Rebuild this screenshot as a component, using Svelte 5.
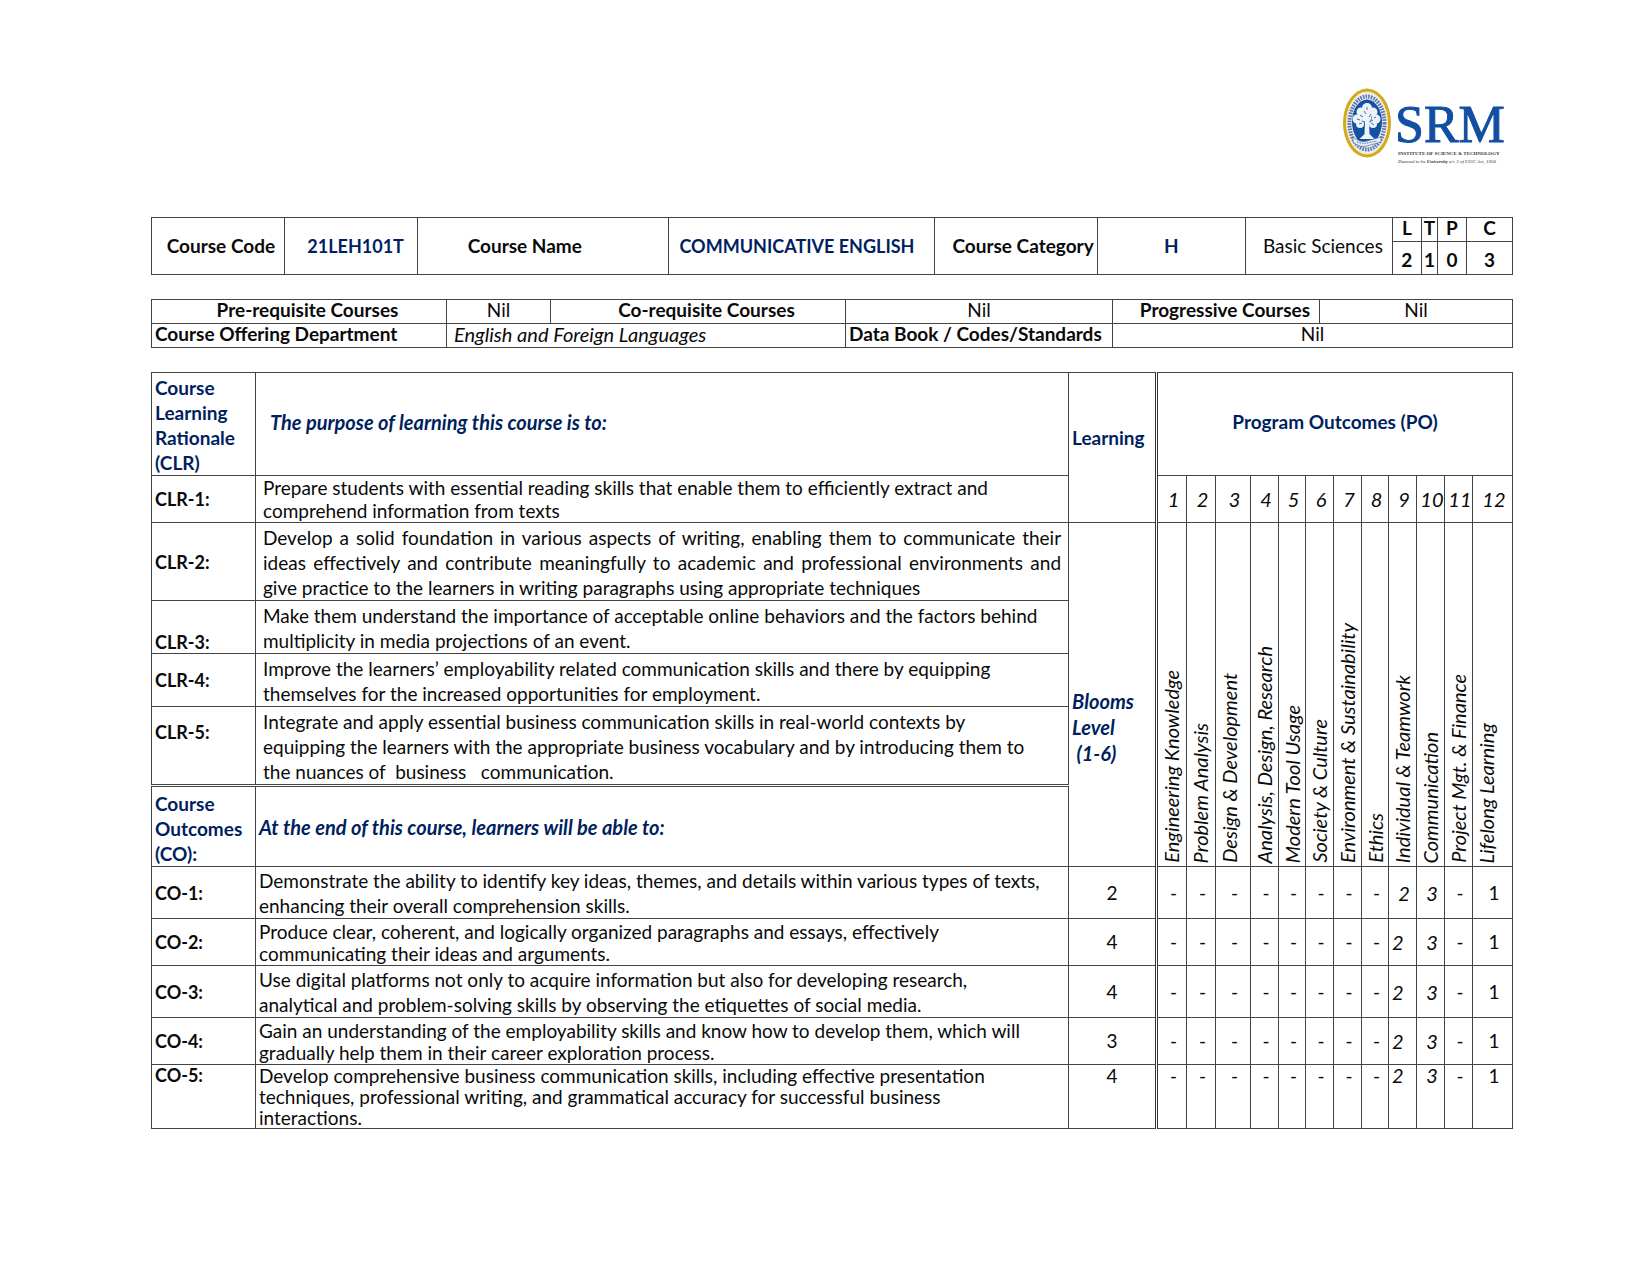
<script>
  const courseCols = [133, 133, 251, 265, 163, 148, 147, 29, 16, 29, 46];
  const requisiteCols = [295, 104, 295, 267, 207, 193];
  const outcomeCols = [104, 813, 88, 30, 29, 35, 28, 27, 28, 28, 27, 28, 28, 28, 40];

  const share = (cols, w) => (w / cols.reduce((a, b) => a + b, 0)) * 100;

  const programOutcomes = [
    'Engineering Knowledge',
    'Problem Analysis',
    'Design & Development',
    'Analysis, Design, Research',
    'Modern Tool Usage',
    'Society & Culture',
    'Environment & Sustainability',
    'Ethics',
    'Individual & Teamwork',
    'Communication',
    'Project Mgt. & Finance',
    'Lifelong Learning',
  ];

  const rationale = [
    {
      id: 'CLR-1:',
      leading: 'medium',
      lines: [
        'Prepare students with essential reading skills that enable them to efficiently extract and',
        'comprehend information from texts',
      ],
    },
    {
      id: 'CLR-2:',
      leading: 'loose',
      justify: true,
      lines: [
        'Develop a solid foundation in various aspects of writing, enabling them to communicate their',
        'ideas effectively and contribute meaningfully to academic and professional environments and',
        'give practice to the learners in writing paragraphs using appropriate techniques',
      ],
    },
    {
      id: 'CLR-3:',
      leading: 'loose',
      label: 'low',
      lines: [
        'Make them understand the importance of acceptable online behaviors and the factors behind',
        'multiplicity in media projections of an event.',
      ],
    },
    {
      id: 'CLR-4:',
      leading: 'loose',
      lines: [
        'Improve the learners’ employability related communication skills and there by equipping',
        'themselves for the increased opportunities for employment.',
      ],
    },
    {
      id: 'CLR-5:',
      leading: 'loose',
      label: 'high',
      lines: [
        'Integrate and apply essential business communication skills in real-world contexts by',
        'equipping the learners with the appropriate business vocabulary and by introducing them to',
        'the nuances of  business   communication.',
      ],
    },
  ];

  const outcomes = [
    {
      id: 'CO-1:',
      leading: 'loose',
      level: 2,
      lines: [
        'Demonstrate the ability to identify key ideas, themes, and details within various types of texts,',
        'enhancing their overall comprehension skills.',
      ],
    },
    {
      id: 'CO-2:',
      leading: 'snug',
      level: 4,
      lines: [
        'Produce clear, coherent, and logically organized paragraphs and essays, effectively',
        'communicating their ideas and arguments.',
      ],
    },
    {
      id: 'CO-3:',
      leading: 'loose',
      level: 4,
      lines: [
        'Use digital platforms not only to acquire information but also for developing research,',
        'analytical and problem-solving skills by observing the etiquettes of social media.',
      ],
    },
    {
      id: 'CO-4:',
      leading: 'snug',
      level: 3,
      lines: [
        'Gain an understanding of the employability skills and know how to develop them, which will',
        'gradually help them in their career exploration process.',
      ],
    },
    {
      id: 'CO-5:',
      leading: 'tight',
      level: 4,
      top: true,
      lines: [
        'Develop comprehensive business communication skills, including effective presentation',
        'techniques, professional writing, and grammatical accuracy for successful business',
        'interactions.',
      ],
    },
  ];

  const marks = ['-', '-', '-', '-', '-', '-', '-', '-', '2', '3', '-', '1'];
</script>

{#snippet columns(cols)}
  <colgroup>
    {#each cols as w}
      <col style="width: {share(cols, w)}%" />
    {/each}
  </colgroup>
{/snippet}

{#snippet textLines(row)}
  {#each row.lines as line, i}
    <span class="line" class:fill={row.justify && i < row.lines.length - 1}>{line}</span>
  {/each}
{/snippet}

<main class="page">
  <header class="brand">
    <svg class="logo" viewBox="0 0 166 84" role="img" aria-label="SRM Institute of Science and Technology">
      <ellipse cx="26" cy="39" rx="24" ry="34.500" fill="#d3a91f" />
      <ellipse cx="26" cy="39" rx="20.500" ry="31" fill="#eceef2" stroke="#f7edbf" stroke-width="1" />
      <ellipse cx="26" cy="39" rx="17.500" ry="26.500" fill="none" stroke="#5a76ae" stroke-width="4" stroke-dasharray="1.600 1.100" />
      <ellipse cx="26" cy="38" rx="15" ry="22.500" fill="#1551a3" />
      <g fill="#eef3fa">
        <circle cx="26" cy="24" r="5" />
        <circle cx="20" cy="28" r="4.500" />
        <circle cx="32" cy="28" r="4.500" />
        <circle cx="16" cy="35" r="4.500" />
        <circle cx="25" cy="33" r="5.500" />
        <circle cx="35" cy="35" r="4.500" />
        <circle cx="19" cy="40" r="4" />
        <circle cx="32" cy="40" r="4" />
        <path d="M24 37h4l.5 13 5 5h-15l5-5z" />
      </g>
      <g fill="none" stroke="#1551a3" stroke-width=".8">
        <path d="M19 31l3 2M23 27l2 3M30 30l-2 3M32 36l-3 2M21 37l3 1M26 23v3M16 35l3 1M35 33l-2 1M18 40l3-1M33 41l-3-2" />
      </g>
      <path d="M12 53q7 6 14 4t14-4v5q-7 2-14 4t-14-4z" fill="#e8edf5" stroke="#4d6da8" stroke-width=".7" />
      <path d="M16 58q5 2 10 1t10-2" fill="none" stroke="#4d6da8" stroke-width="1" stroke-dasharray="1.500 1" />
      <text class="wordmark" x="54" y="58">SRM</text>
      <text class="motto strong" x="57" y="71">INSTITUTE OF SCIENCE &amp; TECHNOLOGY</text>
      <text class="motto slanted" x="57" y="79">Deemed to be <tspan class="strong">University</tspan> u/s 3 of UGC Act, 1956</text>
    </svg>
  </header>

  <table class="course">
    {@render columns(courseCols)}
    <tbody>
      <tr class="credit-names">
        <th rowspan="2" class="end wide">Course Code</th>
        <td rowspan="2" class="navy code compact">21LEH101T</td>
        <th rowspan="2" class="name">Course Name</th>
        <td rowspan="2" class="navy title compact">COMMUNICATIVE ENGLISH</td>
        <th rowspan="2" class="end">Course Category</th>
        <td rowspan="2" class="navy">H</td>
        <td rowspan="2" class="end wide">Basic Sciences</td>
        <th class="slim">L</th>
        <th class="slim">T</th>
        <th class="slim">P</th>
        <th class="slim">C</th>
      </tr>
      <tr class="credit-values">
        <td class="slim strong">2</td>
        <td class="slim strong">1</td>
        <td class="slim strong">0</td>
        <td class="slim strong">3</td>
      </tr>
    </tbody>
  </table>

  <table class="requisites">
    {@render columns(requisiteCols)}
    <tbody>
      <tr>
        <th class="nudged">Pre-requisite Courses</th>
        <td>Nil</td>
        <th class="nudged">Co-requisite Courses</th>
        <td>Nil</td>
        <th class="end wide">Progressive Courses</th>
        <td>Nil</td>
      </tr>
      <tr>
        <th class="start">Course Offering Department</th>
        <td colspan="2" class="start inset italic">English and Foreign Languages</td>
        <th class="start">Data Book / Codes/Standards</th>
        <td colspan="2">Nil</td>
      </tr>
    </tbody>
  </table>

  <table class="outcomes">
    {@render columns(outcomeCols)}
    <tbody>
      <tr class="head">
        <th class="start navy loose low">Course<br />Learning<br />Rationale<br />(CLR)</th>
        <th class="start navy italic purpose">The purpose of learning this course is to:</th>
        <th rowspan="2" class="start navy learning">Learning</th>
        <th colspan="12" class="navy double-left program">Program Outcomes (PO)</th>
      </tr>
      {#each rationale as row, r}
        <tr>
          <th class="start compact {row.label ?? ''}">{row.id}</th>
          <td class="text inset {row.leading}">{@render textLines(row)}</td>
          {#if r === 0}
            {#each programOutcomes as _, n}
              <th class="mark italic plain" class:double-left={n === 0}>{n + 1}</th>
            {/each}
          {:else if r === 1}
            <th rowspan="5" class="start navy italic blooms">Blooms<br />Level<br />&nbsp;(1-6)</th>
            {#each programOutcomes as name, n}
              <th rowspan="5" class="upright italic plain" class:double-left={n === 0}><span>{name}</span></th>
            {/each}
          {/if}
        </tr>
      {/each}
      <tr class="second-head">
        <th class="start navy loose double-top low">Course<br />Outcomes<br />(CO):</th>
        <th class="start navy italic double-top">At the end of this course, learners will be able to:</th>
      </tr>
      {#each outcomes as row, r}
        <tr class:top={row.top}>
          <th class="start compact">{row.id}</th>
          <td class="text {row.leading}">{@render textLines(row)}</td>
          <td>{row.level}</td>
          {#each marks as mark, n}
            <td
              class="mark"
              class:double-left={n === 0}
              class:italic={n === 8 || n === 9}
              class:flush={n === 8 && r > 0}>{mark}</td>
          {/each}
        </tr>
      {/each}
    </tbody>
  </table>
</main>

<style>
  :global(body) {
    margin: 0;
    background: #fff;
  }

  .page {
    box-sizing: border-box;
    padding: 84px 137px 64px 151px;
    font-family: Lato, Carlito, 'Liberation Sans', sans-serif;
    font-size: 19px;
    line-height: 22px;
    color: #0a0a0a;
  }

  .brand {
    display: flex;
    justify-content: flex-end;
    padding-right: 6px;
    margin-bottom: 49px;
  }

  .logo {
    display: block;
    width: 166px;
    height: 84px;
  }

  .wordmark {
    font-family: 'Liberation Serif', serif;
    font-size: 52px;
    fill: #124fa2;
    stroke: #124fa2;
    stroke-width: 1px;
  }

  .motto {
    font-family: 'Liberation Serif', serif;
    font-size: 5px;
    fill: #333;
  }

  .slanted {
    font-style: italic;
  }

  .strong {
    font-weight: 700;
  }

  table {
    width: 100%;
    table-layout: fixed;
    border-collapse: collapse;
  }

  th,
  td {
    padding: 0 3px;
    border: 1px solid #444;
    text-align: center;
    vertical-align: middle;
    white-space: nowrap;
  }

  .plain {
    font-weight: 400;
  }

  .italic {
    font-size: 20px;
    font-style: italic;
  }

  .compact {
    font-size: 18px;
  }

  .navy {
    color: #001f5f;
    font-weight: 700;
  }

  .start {
    text-align: left;
  }

  .end {
    text-align: right;
  }

  .wide {
    padding-right: 9px;
  }

  .inset {
    padding-left: 7px;
    padding-right: 7px;
  }

  .slim {
    padding: 0;
  }

  .code {
    padding-left: 12px;
  }

  .name {
    padding-right: 40px;
  }

  .title {
    padding-right: 12px;
  }

  .nudged {
    padding-left: 20px;
  }

  .credit-names {
    height: 24px;
  }

  .credit-names .slim {
    line-height: 20px;
    vertical-align: top;
  }

  .credit-values {
    height: 33px;
  }

  .credit-values .slim {
    padding-top: 4px;
  }

  .requisites {
    margin: 24px 0;
    line-height: 20px;
  }

  .requisites tr {
    height: 24px;
  }

  .requisites th,
  .requisites td {
    vertical-align: top;
  }

  .head {
    height: 103px;
  }

  .second-head {
    height: 81px;
  }

  .purpose {
    padding-left: 14px;
    padding-bottom: 4px;
  }

  .program {
    padding-bottom: 4px;
  }

  .learning {
    padding-bottom: 20px;
  }

  .blooms {
    padding-top: 64px;
    line-height: 26px;
  }

  .text {
    text-align: left;
    vertical-align: bottom;
  }

  .line {
    display: block;
    white-space: pre;
  }

  .fill {
    white-space: normal;
    text-align-last: justify;
  }

  .loose {
    padding-top: 1px;
    line-height: 25px;
  }

  .loose.inset {
    padding-top: 2px;
  }

  .medium {
    line-height: 23px;
  }

  .snug {
    padding-top: 2px;
  }

  .tight {
    line-height: 21px;
  }

  .low {
    vertical-align: bottom;
  }

  .high {
    padding-top: 14px;
    vertical-align: top;
  }

  .top > * {
    line-height: 21px;
    vertical-align: top;
  }

  .mark {
    padding: 0 0 0 3px;
  }

  .flush {
    text-align: left;
  }

  .upright {
    padding: 0 0 3px 2px;
    text-align: left;
    vertical-align: bottom;
  }

  .upright span {
    display: inline-block;
    writing-mode: vertical-rl;
    transform: rotate(180deg);
    vertical-align: bottom;
  }

  .double-left {
    border-left: 3px double #333;
  }

  .double-top {
    border-top: 3px double #444;
  }
</style>
